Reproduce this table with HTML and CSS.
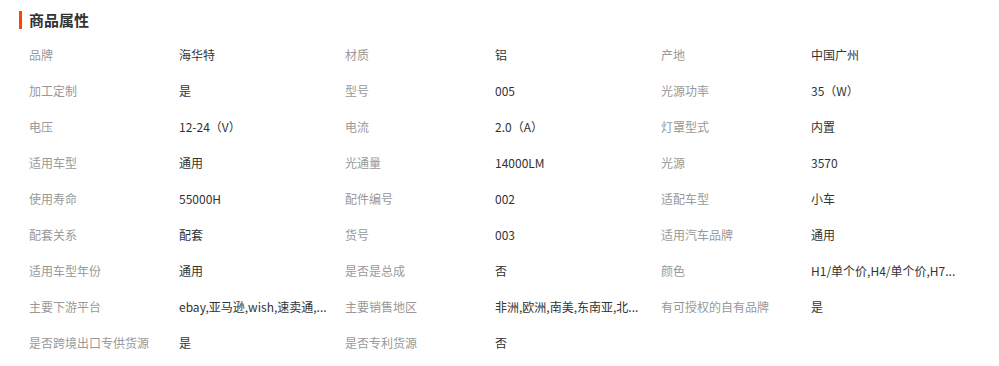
FILE: index.html
```html
<!DOCTYPE html>
<html lang="zh-CN">
<head>
<meta charset="utf-8">
<title>商品属性</title>
<link rel="stylesheet" href="styles.css">
</head>
<body>
<div class="panel">
  <h2 class="title">商品属性</h2>
  <div class="attrs">
    <div class="item"><span class="k">品牌</span><span class="v">海华特</span></div>
    <div class="item"><span class="k">材质</span><span class="v">铝</span></div>
    <div class="item"><span class="k">产地</span><span class="v">中国广州</span></div>
    <div class="item"><span class="k">加工定制</span><span class="v">是</span></div>
    <div class="item"><span class="k">型号</span><span class="v">005</span></div>
    <div class="item"><span class="k">光源功率</span><span class="v">35（W）</span></div>
    <div class="item"><span class="k">电压</span><span class="v">12-24（V）</span></div>
    <div class="item"><span class="k">电流</span><span class="v">2.0（A）</span></div>
    <div class="item"><span class="k">灯罩型式</span><span class="v">内置</span></div>
    <div class="item"><span class="k">适用车型</span><span class="v">通用</span></div>
    <div class="item"><span class="k">光通量</span><span class="v">14000LM</span></div>
    <div class="item"><span class="k">光源</span><span class="v">3570</span></div>
    <div class="item"><span class="k">使用寿命</span><span class="v">55000H</span></div>
    <div class="item"><span class="k">配件编号</span><span class="v">002</span></div>
    <div class="item"><span class="k">适配车型</span><span class="v">小车</span></div>
    <div class="item"><span class="k">配套关系</span><span class="v">配套</span></div>
    <div class="item"><span class="k">货号</span><span class="v">003</span></div>
    <div class="item"><span class="k">适用汽车品牌</span><span class="v">通用</span></div>
    <div class="item"><span class="k">适用车型年份</span><span class="v">通用</span></div>
    <div class="item"><span class="k">是否是总成</span><span class="v">否</span></div>
    <div class="item"><span class="k">颜色</span><span class="v">H1/单个价,H4/单个价,H7...</span></div>
    <div class="item"><span class="k">主要下游平台</span><span class="v">ebay,亚马逊,wish,速卖通,...</span></div>
    <div class="item"><span class="k">主要销售地区</span><span class="v">非洲,欧洲,南美,东南亚,北...</span></div>
    <div class="item"><span class="k">有可授权的自有品牌</span><span class="v">是</span></div>
    <div class="item"><span class="k">是否跨境出口专供货源</span><span class="v">是</span></div>
    <div class="item"><span class="k">是否专利货源</span><span class="v">否</span></div>
  </div>
</div>
</body>
</html>
```

FILE: styles.css
```css
html, body {
  margin: 0;
  padding: 0;
  background: #fff;
}
body {
  font-family: "Noto Sans CJK SC", "Noto Sans", sans-serif;
  font-size: 12px;
  color: #333;
}
.panel {
  padding: 11px 0 0 19px;
}
.title {
  margin: 0;
  padding-left: 7px;
  border-left: 3px solid #ff4400;
  font-size: 15px;
  font-weight: bold;
  line-height: 18px;
  height: 18px;
  color: #333;
}
.attrs {
  display: grid;
  grid-template-columns: repeat(3, 316px);
  margin: 8px 0 0 10px;
}
.item {
  display: flex;
  height: 36px;
  line-height: 36px;
  white-space: nowrap;
}
.k {
  width: 150px;
  flex: none;
  color: #999;
}
.v {
  max-width: 160px;
  overflow: hidden;
  text-overflow: ellipsis;
  color: #333;
}
.v:empty { display: none; }
```
